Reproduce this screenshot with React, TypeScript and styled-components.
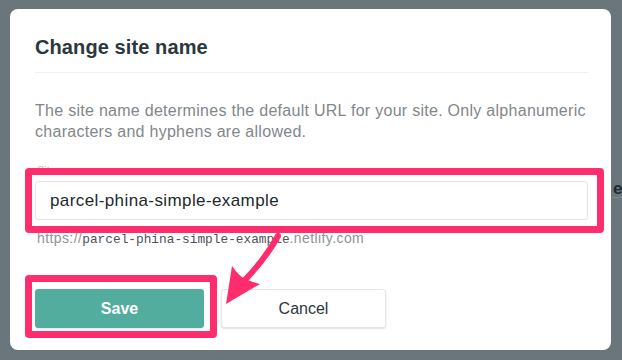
import { ReactElement } from 'react'
import styled, { createGlobalStyle } from 'styled-components'

const GlobalStyle = createGlobalStyle`
  html, body {
    margin: 0;
    padding: 0;
    background: #6b767c;
  }
  * {
    box-sizing: border-box;
  }
`

const StyledPage = styled.div`
  position: relative;
  width: 622px;
  height: 360px;
  overflow: hidden;
  padding: 9px 11px 0 10px;
  font-family: 'Liberation Sans', Arial, sans-serif;
`

// bit of the page behind the modal, peeking out on the right
const StyledPeek = styled.div`
  position: absolute;
  left: 612px;
  top: 180px;
  width: 20px;
  height: 18px;
  border-bottom: 1px solid #7f898e;
  font-size: 17px;
  font-weight: bold;
  line-height: 18px;
  color: #1e292e;
  padding-left: 1px;
`

const StyledCard = styled.div`
  width: 601px;
  height: 341px;
  background: #fff;
  border-radius: 8px;
  padding: 26px 23px 0 25px;
  display: flex;
  flex-direction: column;
`

const StyledHeader = styled.div`
  border-bottom: 1px solid #efefef;
  padding-bottom: 13px;
`

const StyledTitle = styled.h2`
  margin: 0;
  font-size: 20px;
  line-height: 24px;
  font-weight: bold;
  color: #2b373d;
  letter-spacing: 0.1px;
`

const StyledText = styled.p`
  margin: 27px 0 0;
  font-size: 16px;
  line-height: 21px;
  letter-spacing: 0.28px;
  color: #7f878b;
  white-space: nowrap;
`

const StyledField = styled.div`
  margin-top: 21px;
  display: flex;
  flex-direction: column;
`

const StyledLabel = styled.label`
  font-size: 11px;
  line-height: 14px;
  color: #b9bdbf;
  padding-left: 2px;
`

const StyledInput = styled.div`
  margin-top: 4px;
  height: 39px;
  border: 1px solid #e3e4e5;
  border-radius: 3px;
  padding: 0 14px;
  display: flex;
  align-items: center;
  font-size: 17px;
  letter-spacing: 0.4px;
  color: #20292d;
`

const StyledHint = styled.div`
  margin-top: 10px;
  padding-left: 2px;
  font-size: 14px;
  line-height: 16px;
  letter-spacing: 0.4px;
  color: #8d9396;
`

const StyledMono = styled.span`
  font-family: 'Liberation Mono', 'Courier New', monospace;
  font-size: 12.8px;
  letter-spacing: 0;
  color: #4b5256;
`

const StyledActions = styled.div`
  margin-top: 41px;
  display: flex;
  gap: 17px;
`

const StyledButton = styled.button<{ $primary?: boolean }>`
  height: 39px;
  width: ${({ $primary }) => ($primary ? '169px' : '165px')};
  border-radius: 3px;
  font-family: 'Liberation Sans', Arial, sans-serif;
  font-size: 16px;
  font-weight: ${({ $primary }) => ($primary ? 'bold' : 'normal')};
  color: ${({ $primary }) => ($primary ? '#fff' : '#2b373d')};
  background: ${({ $primary }) => ($primary ? '#52ad9f' : '#fff')};
  border: 1px solid ${({ $primary }) => ($primary ? '#52ad9f' : '#e4e5e6')};
  box-shadow: 0 1px 2px rgba(0, 0, 0, 0.12);
`

// annotation layer drawn over the screenshot
const StyledFrame = styled.div<{ $left: number; $top: number; $w: number; $h: number }>`
  position: absolute;
  left: ${({ $left }) => $left}px;
  top: ${({ $top }) => $top}px;
  width: ${({ $w }) => $w}px;
  height: ${({ $h }) => $h}px;
  border: 7px solid #ff2d6d;
  border-radius: 4px;
  pointer-events: none;
`

const StyledArrow = styled.svg`
  position: absolute;
  left: 0;
  top: 0;
  pointer-events: none;
`

const Arrow = (): ReactElement => (
  <StyledArrow width={622} height={360} viewBox="0 0 622 360">
    <path
      d="M278 236 Q266 258 244 281"
      fill="none"
      stroke="#ff2d6d"
      strokeWidth={6}
      strokeLinecap="round"
    />
    <path d="M226 304 L232 266 Q239 276 245 279 Q252 282 260 284 Z" fill="#ff2d6d" />
  </StyledArrow>
)

export default function App(): ReactElement {
  return (
    <StyledPage>
      <GlobalStyle />
      <StyledPeek>ex</StyledPeek>
      <StyledCard>
        <StyledHeader>
          <StyledTitle>Change site name</StyledTitle>
        </StyledHeader>
        <StyledText>
          The site name determines the default URL for your site. Only alphanumeric
          <br />
          characters and hyphens are allowed.
        </StyledText>
        <StyledField>
          <StyledLabel>Site name</StyledLabel>
          <StyledInput>parcel-phina-simple-example</StyledInput>
          <StyledHint>
            https://<StyledMono>parcel-phina-simple-example</StyledMono>.netlify.com
          </StyledHint>
        </StyledField>
        <StyledActions>
          <StyledButton $primary>Save</StyledButton>
          <StyledButton>Cancel</StyledButton>
        </StyledActions>
      </StyledCard>
      <StyledFrame $left={25} $top={168} $w={579} $h={65} />
      <StyledFrame $left={25} $top={275} $w={192} $h={63} />
      <Arrow />
    </StyledPage>
  )
}
